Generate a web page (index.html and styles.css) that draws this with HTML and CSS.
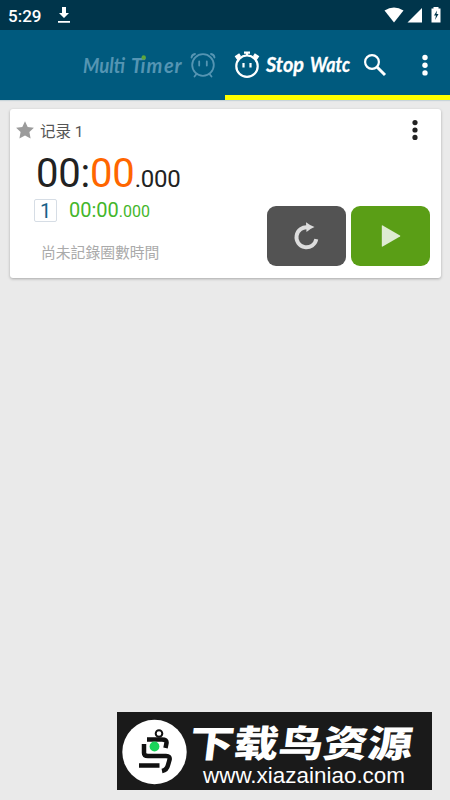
FILE: index.html
```html
<!DOCTYPE html>
<html lang="zh">
<head>
<meta charset="utf-8">
<title>Stop Watch</title>
<link rel="stylesheet" href="styles.css">
</head>
<body>
<header class="status">
  <span class="clock">5:29</span>
  <svg class="download" width="14" height="18" viewBox="0 0 14 18"><path d="M5 1h4v6h3L7 12 2 7h3zM1 15h12v1.8H1z" fill="#fff"/></svg>
  <svg class="signals" width="58" height="18" viewBox="0 0 58 18">
    <path d="M0.5 4.5Q10 -1.5 19.5 4.5L10 16.5z" fill="#fff"/>
    <path d="M38 2V16.5H23.5z" fill="#fff"/>
    <path d="M49.5 1h5v1.5h2V16.500h-9V2.500h2z" fill="#fff"/>
    <path d="M53 4.500l-3 5h2l-1 4.500 3.500-6h-2z" fill="#00354b"/>
  </svg>
</header>
<nav class="appbar">
  <div class="tab tab-timer">
    <svg width="136" height="34" viewBox="0 0 136 34">
      <text class="logo muted" x="1" y="26" textLength="42" lengthAdjust="spacingAndGlyphs">Multi</text>
      <text class="logo muted" x="49 58.500 64.500 82 92.500" y="26">Timer</text>
      <circle cx="61.700" cy="10.500" r="2.200" fill="#5da63b"/>
      <g fill="none" stroke="#5595b3" stroke-width="1.800" stroke-linecap="round">
        <circle cx="121" cy="18" r="10.800"/>
        <path d="M109.500 10.500Q110 7.500 113 7M129 7Q132 7.500 132.500 10.500M114.500 27l-2 2.500M127.500 27l2 2.500M117.200 14.500v4M124.800 14.500v4"/>
      </g>
    </svg>
  </div>
  <div class="tab tab-watch">
    <svg width="118" height="34" viewBox="0 0 118 34">
      <g fill="none" stroke="#fff" stroke-width="2.200">
        <circle cx="14" cy="19.200" r="10.700"/>
        <path d="M11 5.700h6M14 5v4M4 12.500l3-4M24 12.500l-3-4M10.500 16v4.500M17.500 16v4.500"/>
        <path d="M2.500 10.500l4.500-3M25.500 10.500l-4.500-3" stroke-width="3"/>
      </g>
      <text class="logo bright" x="33" y="25" textLength="38" lengthAdjust="spacingAndGlyphs">Stop</text>
      <text class="logo bright" x="77" y="25" textLength="40" lengthAdjust="spacingAndGlyphs">Watc</text>
    </svg>
    <svg class="search" width="24" height="24" viewBox="0 0 24 24" fill="none" stroke="#fff"><circle cx="9" cy="9" r="6.900" stroke-width="2.200"/><path d="M14 14l8 8" stroke-width="3"/></svg>
    <svg class="more" width="8" height="24" viewBox="0 0 8 24" fill="#fff"><circle cx="4" cy="4.500" r="2.700"/><circle cx="4" cy="12.200" r="2.700"/><circle cx="4" cy="19.900" r="2.700"/></svg>
  </div>
</nav>
<main class="card">
  <div class="title">
    <svg width="18" height="18" viewBox="0 0 18 18"><path d="M9 .3l2.700 5.700 6.200.8-4.500 4.300 1.200 6.400L9 14.500l-5.600 3 1.200-6.400L.1 6.800l6.200-.8z" fill="#9b9b9b"/></svg>
    <span class="name">记录 1</span>
    <svg class="card-more" width="8" height="22" viewBox="0 0 8 22" fill="#222"><circle cx="4" cy="3.600" r="2.600"/><circle cx="4" cy="11" r="2.600"/><circle cx="4" cy="18.400" r="2.600"/></svg>
  </div>
  <div class="time"><span>00:</span><span class="seconds">00</span><span class="millis">.000</span></div>
  <div class="body">
    <div class="laps">
      <div class="lap"><span class="badge">1</span><span class="laptime">00:00<small>.000</small></span></div>
      <div class="empty">尚未記錄圈數時間</div>
    </div>
    <div class="actions">
      <button class="btn reset" aria-label="Reset"><svg width="26" height="28" viewBox="0 0 26 28"><path d="M14 5.400A10 10 0 1 0 22.300 17.200" fill="none" stroke="#ddd" stroke-width="3.900"/><path d="M12 .3Q16 3.500 20.500 5Q16.500 6.500 12.500 10z" fill="#ddd"/></svg></button>
      <button class="btn play" aria-label="Start"><svg width="20" height="22" viewBox="0 0 20 22"><path d="M.8.800Q.8 0 1.700.500L19 10.500q.8.500 0 1L1.700 21.500Q.8 22 .8 21z" fill="#deebd2"/></svg></button>
    </div>
  </div>
</main>
<footer class="brand">
  <svg width="315" height="78" viewBox="0 0 315 78">
    <circle cx="37.500" cy="40" r="32.200" fill="#fff"/>
    <g fill="none" stroke="#111" stroke-width="4.500">
      <circle cx="42" cy="21.500" r="3.300" stroke-width="2"/>
      <path d="M30 27.500H45Q50 27.500 49.500 31L48.500 36M27 32V41Q27 44 31 44H49Q53.500 44 52.500 48L51 53Q50 58 45 59M22 53.500H42.500"/>
    </g>
    <circle cx="37.500" cy="34.500" r="4.900" fill="#19d45a"/>
    <text class="brand-name" transform="translate(71 45) skewX(-7)" x="0" y="0" textLength="223" lengthAdjust="spacingAndGlyphs">下载鸟资源</text>
    <text class="brand-url" x="86" y="71" textLength="202" lengthAdjust="spacingAndGlyphs">www.xiazainiao.com</text>
  </svg>
</footer>
</body>
</html>
```
FILE: styles.css
```css
* { box-sizing: border-box; }
body {
  margin: 0;
  height: 800px;
  display: flex;
  flex-direction: column;
  background: #eaeaea;
  font-family: Roboto, "Noto Sans CJK SC", sans-serif;
  overflow: hidden;
}
svg { display: block; flex: none; overflow: visible; }
.status {
  height: 30px;
  flex: none;
  display: flex;
  align-items: center;
  padding: 0 8px;
  background: #00354b;
  color: #fff;
}
.clock { width: 49px; font-size: 17px; font-weight: 500; padding-top: 1px; }
.signals { margin-left: auto; }
.appbar {
  height: 70px;
  flex: none;
  display: flex;
  background: #005a7e;
  box-shadow: 0 1px 1px #c8d4d9;
}
.tab { width: 225px; height: 70px; display: flex; }
.tab-timer { padding: 17px 0 0 82px; }
.tab-watch { padding: 17px 0 0 8px; border-bottom: 5px solid #ff0; }
.search { margin: 6px 0 0 12px; }
.more { margin: 6px 0 0 34px; }
.logo { font-family: Lato, sans-serif; font-style: italic; font-weight: 700; font-size: 20px; }
.muted { fill: #5595b3; }
.bright { fill: #fff; stroke: #fff; stroke-width: .3px; }
.card {
  width: 431px;
  height: 169px;
  flex: none;
  margin: 9px 0 0 10px;
  background: #fff;
  border-radius: 3px;
  box-shadow: 0 1px 3px rgba(0, 0, 0, .28);
}
.title { height: 41px; display: flex; align-items: center; padding: 0 22px 0 6px; }
.name { margin-left: 6px; font-size: 15.500px; color: #555; }
.card-more { margin-left: auto; }
.time {
  height: 48px;
  padding-left: 26px;
  display: flex;
  align-items: baseline;
  font-size: 40px;
  line-height: 47px;
  letter-spacing: -.2px;
  color: #222;
}
.seconds { color: #f60; }
.millis { font-size: 24px; }
.body { display: flex; justify-content: space-between; padding: 0 11px 0 24px; }
.lap { display: flex; align-items: center; height: 25px; }
.badge {
  width: 23px;
  height: 23px;
  border: 1px solid #d6dde5;
  border-radius: 2px;
  color: #176186;
  font-size: 20px;
  line-height: 22px;
  text-align: center;
}
.laptime { margin-left: 12px; font-size: 20px; line-height: 25px; color: #44b62b; }
.laptime small { font-size: 16px; }
.empty { margin: 18px 0 0 7px; font: 14.800px/22px "Noto Sans CJK TC", sans-serif; color: #aaa; }
.actions { display: flex; gap: 5px; padding-top: 8px; }
.btn {
  width: 79px;
  height: 60px;
  padding: 0;
  border: 0;
  border-radius: 9px;
  display: flex;
  align-items: center;
  justify-content: center;
}
.reset { background: #535353; }
.play { background: #5a9e16; }
.brand { width: 315px; height: 78px; flex: none; margin: auto 0 10px 117px; background: #1a1a1a; }
.brand-name { font-family: "Noto Sans CJK SC", sans-serif; font-weight: 900; font-size: 37px; fill: #fff; }
.brand-url { font-family: "Liberation Sans", sans-serif; font-size: 22px; fill: #fff; }
```
